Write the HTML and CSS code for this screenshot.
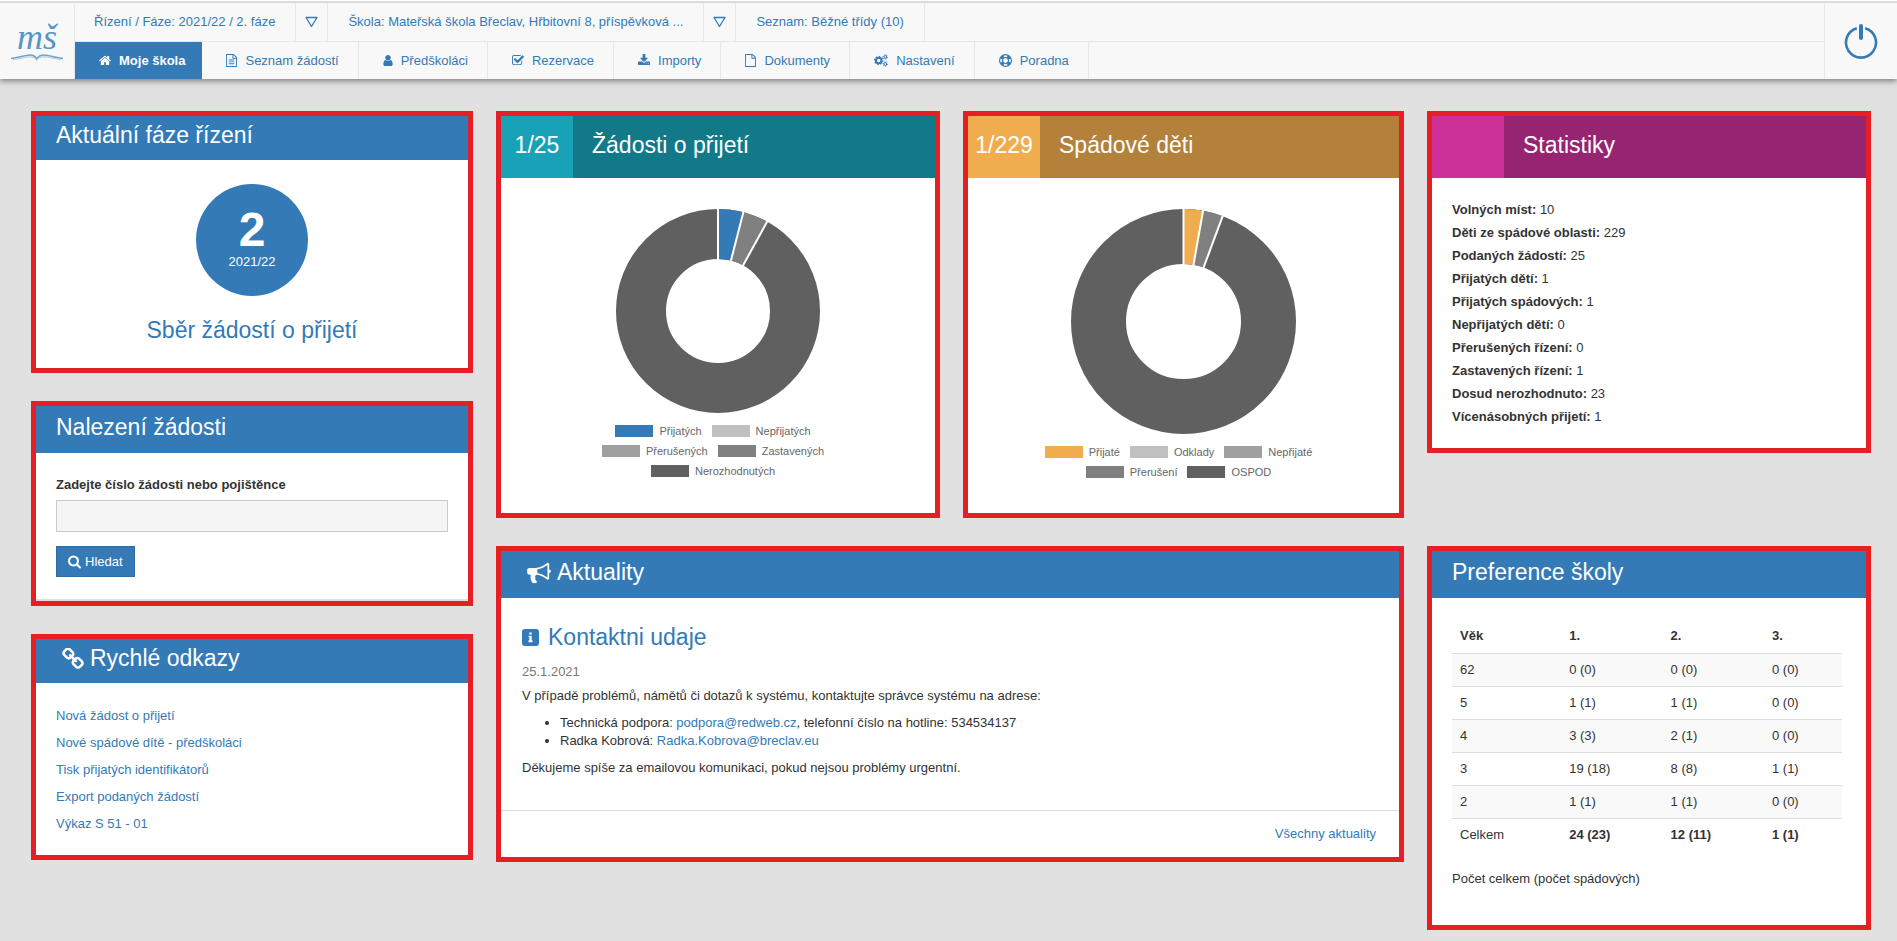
FILE: index.html
```html
<!DOCTYPE html>
<html lang="cs">
<head>
<meta charset="utf-8">
<title>Moje škola</title>
<link rel="stylesheet" href="styles.css">
</head>
<body>
<header class="topbar">
  <a class="logo" href="#">
    <span class="logo-text">mš</span>
    <svg class="logo-book" width="54" height="8" viewBox="0 0 54 8" aria-hidden="true"><path d="M1 5.500C8 5 15 2 20 2q5 0 6.500 4Q29 2 34 2c5 0 12 3 19 3.500" fill="none" stroke="#6fa3cd" stroke-width="1.500"/><path d="M3 6.500C10 6 15 3.800 20 3.800q5 0 6.500 3 2-3 7.500-3c5 0 10 2 17 2.700" fill="none" stroke="#a9c8e0" stroke-width="1"/></svg>
  </a>
  <div class="bars">
    <div class="context">
      <a class="context-item" href="#">Řízení / Fáze: 2021/22 / 2. fáze</a>
      <button class="context-toggle" type="button" aria-label="Vybrat fázi"><svg width="13" height="12" viewBox="0 0 13 12"><path d="M1 1.500h11L6.500 10.500z" fill="none" stroke="currentColor" stroke-width="1.300" stroke-linejoin="round"/></svg></button>
      <a class="context-item" href="#">Škola: Mateřská škola Břeclav, Hřbitovní 8, příspěvková ...</a>
      <button class="context-toggle" type="button" aria-label="Vybrat školu"><svg width="13" height="12" viewBox="0 0 13 12"><path d="M1 1.500h11L6.500 10.500z" fill="none" stroke="currentColor" stroke-width="1.300" stroke-linejoin="round"/></svg></button>
      <a class="context-item" href="#">Seznam: Běžné třídy (10)</a>
    </div>
    <nav class="menu">
      <a class="menu-item active" href="#"><svg width="12" height="13" viewBox="64 0 1664 1792"><path d="M1472 992v480q0 26-19 45t-45 19h-384v-384h-256v384h-384q-26 0-45-19t-19-45v-480q0-1 .5-3t.5-3l575-474 575 474q1 2 1 6zm223-69l-62 74q-8 9-21 11h-3q-13 0-21-7l-692-577-692 577q-12 8-24 7-13-2-21-11l-62-74q-8-10-7-23.500t11-21.500l719-599q32-26 76-26t76 26l244 204v-195q0-14 9-23t23-9h192q14 0 23 9t9 23v408l219 182q10 8 11 21.500t-7 23.500z"/></svg>Moje škola</a>
      <a class="menu-item" href="#"><svg width="11" height="13" viewBox="128 0 1536 1792"><path d="M1596 380q28 28 48 76t20 88v1152q0 40-28 68t-68 28h-1344q-40 0-68-28t-28-68v-1600q0-40 28-68t68-28h896q40 0 88 20t76 48zm-444-244v376h376q-10-29-22-41l-313-313q-12-12-41-22zm384 1528v-1024h-416q-40 0-68-28t-28-68v-416h-768v1536h1280zm-1024-864q0-14 9-23t23-9h704q14 0 23 9t9 23v64q0 14-9 23t-23 9h-704q-14 0-23-9t-9-23v-64zm736 224q14 0 23 9t9 23v64q0 14-9 23t-23 9h-704q-14 0-23-9t-9-23v-64q0-14 9-23t23-9h704zm0 256q14 0 23 9t9 23v64q0 14-9 23t-23 9h-704q-14 0-23-9t-9-23v-64q0-14 9-23t23-9h704z"/></svg>Seznam žádostí</a>
      <a class="menu-item" href="#"><svg width="10" height="13" viewBox="256 0 1280 1792"><path d="M1536 1399q0 109-62.500 187t-150.500 78h-854q-88 0-150.500-78t-62.500-187q0-85 8.500-160.500t31.500-152 58.500-131 94-89 134.500-34.500q131 128 313 128t313-128q76 0 134.500 34.500t94 89 58.500 131 31.500 152 8.500 160.500zm-256-887q0 159-112.500 271.500t-271.500 112.500-271.500-112.500-112.500-271.500 112.500-271.500 271.500-112.500 271.500 112.500 112.500 271.500z"/></svg>Předškoláci</a>
      <a class="menu-item" href="#"><svg width="12" height="13" viewBox="64 0 1664 1792"><path d="M1472 930v318q0 119-84.500 203.500t-203.500 84.500h-832q-119 0-203.500-84.500t-84.500-203.500v-832q0-119 84.500-203.500t203.500-84.500h832q63 0 117 25 15 7 18 23 3 17-9 29l-49 49q-10 10-23 10-3 0-9-2-23-6-45-6h-832q-66 0-113 47t-47 113v832q0 66 47 113t113 47h832q66 0 113-47t47-113v-254q0-13 9-22l64-64q10-10 23-10 6 0 12 3 20 8 20 29zm231-489l-814 814q-24 24-57 24t-57-24l-430-430q-24-24-24-57t24-57l110-110q24-24 57-24t57 24l263 263 647-647q24-24 57-24t57 24l110 110q24 24 24 57t-24 57z"/></svg>Rezervace</a>
      <a class="menu-item" href="#"><svg width="12" height="13" viewBox="64 0 1664 1792"><path d="M1344 1344q0-26-19-45t-45-19-45 19-19 45 19 45 45 19 45-19 19-45zm256 0q0-26-19-45t-45-19-45 19-19 45 19 45 45 19 45-19 19-45zm128-224v320q0 40-28 68t-68 28h-1472q-40 0-68-28t-28-68v-320q0-40 28-68t68-28h465l135 136q58 56 136 56t136-56l136-136h464q40 0 68 28t28 68zm-325-569q17 41-14 70l-448 448q-18 19-45 19t-45-19l-448-448q-31-29-14-70 17-39 59-39h256v-448q0-26 19-45t45-19h256q26 0 45 19t19 45v448h256q42 0 59 39z"/></svg>Importy</a>
      <a class="menu-item" href="#"><svg width="11" height="13" viewBox="128 0 1536 1792"><path d="M1596 380q28 28 48 76t20 88v1152q0 40-28 68t-68 28h-1344q-40 0-68-28t-28-68v-1600q0-40 28-68t68-28h896q40 0 88 20t76 48zm-444-244v376h376q-10-29-22-41l-313-313q-12-12-41-22zm384 1528v-1024h-416q-40 0-68-28t-28-68v-416h-768v1536h1280z"/></svg>Dokumenty</a>
      <a class="menu-item" href="#"><svg width="14" height="13" viewBox="0 0 14 13"><g fill="none" stroke="currentColor"><circle cx="4.700" cy="6.500" r="2.800" stroke-width="2"/><circle cx="4.700" cy="6.500" r="4.100" stroke-width="1.200" pathLength="16" stroke-dasharray="1 1"/><circle cx="11.300" cy="3" r="1.400" stroke-width="1"/><circle cx="11.300" cy="3" r="2.300" stroke-width=".9" pathLength="12" stroke-dasharray="1 1"/><circle cx="11.300" cy="10" r="1.400" stroke-width="1"/><circle cx="11.300" cy="10" r="2.300" stroke-width=".9" pathLength="12" stroke-dasharray="1 1"/></g></svg>Nastavení</a>
      <a class="menu-item" href="#"><svg width="13" height="13" viewBox="0 0 13 13"><g fill="none" stroke="currentColor"><circle cx="6.500" cy="6.500" r="5.900" stroke-width="1.200"/><circle cx="6.500" cy="6.500" r="3" stroke-width="1.200"/><circle cx="6.500" cy="6.500" r="4.500" stroke-width="2.400" pathLength="8" stroke-dasharray="1 1" stroke-dashoffset="-.5"/></g></svg>Poradna</a>
    </nav>
  </div>
  <button class="power" type="button" aria-label="Odhlásit"><svg width="34" height="38" viewBox="0 0 34 38"><path d="M12.800 6.200A15 15 0 1 0 21.200 6.200" fill="none" stroke="currentColor" stroke-width="2.600"/><path d="M17 4v12" stroke="currentColor" stroke-width="4" stroke-linecap="round"/></svg></button>
</header>

<main class="board">
  <div class="side">
    <section class="panel">
      <h2 class="panel-title">Aktuální fáze řízení</h2>
      <div class="phase">
        <div class="phase-circle"><strong class="phase-number">2</strong><span class="phase-year">2021/22</span></div>
        <a class="phase-name" href="#">Sběr žádostí o přijetí</a>
      </div>
    </section>
    <section class="panel">
      <h2 class="panel-title tall">Nalezení žádosti</h2>
      <form class="search">
        <label class="search-label" for="query">Zadejte číslo žádosti nebo pojištěnce</label>
        <input class="search-input" id="query" type="text">
        <button class="search-button" type="button"><svg width="13" height="14" viewBox="64 128 1664 1664"><path d="M1216 832q0-185-131.500-316.500t-316.500-131.500-316.500 131.500-131.500 316.500 131.500 316.500 316.500 131.500 316.500-131.500 131.500-316.500zm512 832q0 52-38 90t-90 38q-54 0-90-38l-343-342q-179 124-399 124-143 0-273.500-55.500t-225-150-150-225-55.500-273.500 55.500-273.500 150-225 225-150 273.500-55.500 273.500 55.500 225 150 150 225 55.500 273.500q0 220-124 399l343 343q37 37 37 90z"/></svg>Hledat</button>
      </form>
    </section>
    <section class="panel">
      <h2 class="panel-title with-icon"><svg width="22" height="22" viewBox="64 64 1664 1664"><path d="M1520 1216q0-40-28-68l-208-208q-28-28-68-28-42 0-72 32 3 3 19 18.500t21.500 21.500 15 19 13 25.500 3.500 27.500q0 40-28 68t-68 28q-15 0-27.500-3.500t-25.500-13-19-15-21.500-21.500-18.500-19q-33 31-33 73 0 40 28 68l206 207q27 27 68 27 40 0 68-26l147-146q28-28 28-67zm-703-705q0-40-28-68l-206-207q-28-28-68-28-39 0-68 27l-147 146q-28 28-28 67 0 40 28 68l208 208q27 27 68 27 42 0 72-31-3-3-19-18.500t-21.500-21.500-15-19-13-25.500-3.500-27.500q0-40 28-68t68-28q15 0 27.500 3.500t25.500 13 19 15 21.500 21.500 18.500 19q33-31 33-73zm895 705q0 120-85 203l-147 146q-83 83-203 83-121 0-204-85l-206-207q-83-83-83-203 0-123 88-209l-88-88q-86 88-208 88-120 0-204-84l-208-208q-84-84-84-204t85-203l147-146q83-83 203-83 121 0 204 85l206 207q83 83 83 203 0 123-88 209l88 88q86-88 208-88 120 0 204 84l208 208q84 84 84 204z"/></svg>Rychlé odkazy</h2>
      <ul class="quick">
        <li><a href="#">Nová žádost o přijetí</a></li>
        <li><a href="#">Nové spádové dítě - předškoláci</a></li>
        <li><a href="#">Tisk přijatých identifikátorů</a></li>
        <li><a href="#">Export podaných žádostí</a></li>
        <li><a href="#">Výkaz S 51 - 01</a></li>
      </ul>
    </section>
  </div>

  <section class="panel">
    <div class="count-head teal"><span class="count">1/25</span><h2 class="count-title">Žádosti o přijetí</h2></div>
    <div class="chart">
      <svg width="204" height="204" viewBox="-102 -102 204 204" role="img" aria-label="Žádosti o přijetí">
        <circle r="77" fill="none" stroke="#606060" stroke-width="50"/>
        <g transform="rotate(-90)" fill="none" stroke-width="50">
          <circle r="77" stroke="#808080" pathLength="360" stroke-dasharray="28.800 360"/>
          <circle r="77" stroke="#337ab7" pathLength="360" stroke-dasharray="14.400 360"/>
        </g>
        <g stroke="#fff" stroke-width="2"><path d="M0-51v-52"/><path d="M0-51v-52" transform="rotate(14.400)"/><path d="M0-51v-52" transform="rotate(28.800)"/></g>
      </svg>
      <ul class="legend">
        <li><span class="swatch blue"></span>Přijatých</li>
        <li><span class="swatch g1"></span>Nepřijatých</li>
        <li><span class="swatch g2"></span>Přerušených</li>
        <li><span class="swatch g3"></span>Zastavených</li>
        <li><span class="swatch g4"></span>Nerozhodnutých</li>
      </ul>
    </div>
  </section>

  <section class="panel">
    <div class="count-head amber"><span class="count">1/229</span><h2 class="count-title">Spádové děti</h2></div>
    <div class="chart">
      <svg width="225" height="225" viewBox="-112.500 -112.500 225 225" role="img" aria-label="Spádové děti">
        <circle r="85" fill="none" stroke="#606060" stroke-width="55"/>
        <g transform="rotate(-90)" fill="none" stroke-width="55">
          <circle r="85" stroke="#808080" pathLength="360" stroke-dasharray="20.400 360"/>
          <circle r="85" stroke="#f0ad4e" pathLength="360" stroke-dasharray="10 360"/>
        </g>
        <g stroke="#fff" stroke-width="2"><path d="M0-56v-58"/><path d="M0-56v-58" transform="rotate(10)"/><path d="M0-56v-58" transform="rotate(20.400)"/></g>
      </svg>
      <ul class="legend">
        <li><span class="swatch orange"></span>Přijaté</li>
        <li><span class="swatch g1"></span>Odklady</li>
        <li><span class="swatch g2"></span>Nepřijaté</li>
        <li><span class="swatch g3"></span>Přerušení</li>
        <li><span class="swatch g4"></span>OSPOD</li>
      </ul>
    </div>
  </section>

  <section class="panel top">
    <div class="count-head purple"><span class="count"></span><h2 class="count-title">Statistiky</h2></div>
    <ul class="stats">
      <li><b>Volných míst:</b> 10</li>
      <li><b>Děti ze spádové oblasti:</b> 229</li>
      <li><b>Podaných žádostí:</b> 25</li>
      <li><b>Přijatých dětí:</b> 1</li>
      <li><b>Přijatých spádových:</b> 1</li>
      <li><b>Nepřijatých dětí:</b> 0</li>
      <li><b>Přerušených řízení:</b> 0</li>
      <li><b>Zastavených řízení:</b> 1</li>
      <li><b>Dosud nerozhodnuto:</b> 23</li>
      <li><b>Vícenásobných přijetí:</b> 1</li>
    </ul>
  </section>

  <section class="panel top wide">
    <h2 class="panel-title tall with-icon"><svg width="24" height="22" viewBox="0 64 1792 1664"><path d="M1664 640q53 0 90.500 37.500t37.500 90.500-37.500 90.500-90.500 37.500v384q0 52-38 90t-90 38q-417-347-812-380-58 19-91 66t-31 100.500 40 92.500q-20 33-23 65.500t6 58 33.500 55 48 50 61.500 50.500q-29 58-111.500 83t-168.500 11.500-132-55.500q-7-23-29.500-87.500t-32-94.500-23-89-15-101 3.500-98.500 22-110.500h-122q-66 0-113-47t-47-113v-192q0-66 47-113t113-47h480q435 0 896-384 52 0 90 38t38 90v384zm-128 604v-954q-394 302-768 343v270q377 42 768 341z"/></svg>Aktuality</h2>
    <article class="news">
      <h3 class="news-title"><svg width="17" height="17" viewBox="0 0 17 17" aria-hidden="true"><rect width="17" height="17" rx="3"/><path d="M7.300 3.500h2.400v2H7.300zM6.600 6.800h3.100v4.800h.9v1.600H6.400v-1.600h.9V8.300h-.7z" fill="#fff"/></svg><a href="#">Kontaktni udaje</a></h3>
      <time class="news-date" datetime="2021-01-25">25.1.2021</time>
      <p>V případě problémů, námětů či dotazů k systému, kontaktujte správce systému na adrese:</p>
      <ul>
        <li>Technická podpora: <a href="#">podpora@redweb.cz</a>, telefonní číslo na hotline: 534534137</li>
        <li>Radka Kobrová: <a href="#">Radka.Kobrova@breclav.eu</a></li>
      </ul>
      <p>Děkujeme spíše za emailovou komunikaci, pokud nejsou problémy urgentní.</p>
    </article>
    <footer class="news-footer"><a href="#">Všechny aktuality</a></footer>
  </section>

  <section class="panel top">
    <h2 class="panel-title tall">Preference školy</h2>
    <div class="preferences">
      <table class="ages">
        <thead><tr><th>Věk</th><th>1.</th><th>2.</th><th>3.</th></tr></thead>
        <tbody>
          <tr><td>62</td><td>0 (0)</td><td>0 (0)</td><td>0 (0)</td></tr>
          <tr><td>5</td><td>1 (1)</td><td>1 (1)</td><td>0 (0)</td></tr>
          <tr><td>4</td><td>3 (3)</td><td>2 (1)</td><td>0 (0)</td></tr>
          <tr><td>3</td><td>19 (18)</td><td>8 (8)</td><td>1 (1)</td></tr>
          <tr><td>2</td><td>1 (1)</td><td>1 (1)</td><td>0 (0)</td></tr>
          <tr><td>Celkem</td><td><b>24 (23)</b></td><td><b>12 (11)</b></td><td><b>1 (1)</b></td></tr>
        </tbody>
      </table>
      <p class="note">Počet celkem (počet spádových)</p>
    </div>
  </section>
</main>
</body>
</html>
```
FILE: styles.css
```css
* { box-sizing: border-box; }

body {
  margin: 0;
  background: #e1e1e1;
  color: #333;
  font: 13px/18px "Liberation Sans", Arial, sans-serif;
}

h2, h3, p, ul { margin: 0; padding: 0; font-weight: normal; }
ul { list-style: none; }
a { color: #337ab7; text-decoration: none; }
button { font: inherit; cursor: pointer; }
svg { display: block; flex: none; fill: currentColor; }

/* Top bar */
.topbar {
  display: flex;
  border-top: 1px solid #fff;
  background: #f8f8f8;
  box-shadow: 0 2px 6px rgba(0, 0, 0, .45);
}
.logo, .bars, .power { border-top: 2px solid #d9dcdc; }
.logo {
  display: flex;
  flex-direction: column;
  align-items: center;
  justify-content: center;
  width: 74px;
  color: #5596c8;
}
.logo-text {
  font: italic 36px/32px "Liberation Serif", "Times New Roman", serif;
}
.bars { flex: 1; border-left: 1px solid #e7e7e7; border-right: 1px solid #e7e7e7; }
.context, .menu { display: flex; }
.context { height: 39px; border-bottom: 1px solid #e7e7e7; }
.context-item, .context-toggle {
  display: flex;
  align-items: center;
  border: 0;
  border-right: 1px solid #e7e7e7;
  background: none;
  color: #337ab7;
}
.context-item { padding: 0 20px; }
.context-item:first-child { padding-left: 19px; }
.context-toggle { width: 32px; padding: 0; justify-content: center; }
.menu { height: 37px; }
.menu-item {
  display: flex;
  align-items: center;
  gap: 8px;
  padding: 0 19px 0 24px;
  border-right: 1px solid #e7e7e7;
}
.menu-item.active {
  padding-right: 17px;
  border: 0;
  background: #337ab7;
  color: #fff;
  font-weight: bold;
}
.power {
  display: flex;
  align-items: center;
  justify-content: center;
  width: 72px;
  padding: 0;
  border-width: 2px 0 0;
  background: none;
  color: #337ab7;
}

/* Board */
.board {
  display: grid;
  grid-template-columns: 442fr 444fr 441fr 444fr;
  gap: 28px 23px;
  padding: 32px 26px 10px 31px;
}
.side {
  display: flex;
  flex-direction: column;
  grid-row: span 2;
  gap: 28px;
}
.panel { border: 5px solid #e61e25; background: #fff; }
.top { align-self: start; }
.wide { grid-column: span 2; }

.panel-title, .count-title, .count { font-size: 23px; line-height: 25px; color: #fff; }
.panel-title { padding: 7px 20px 12px; background: #337ab7; }
.tall { padding: 9px 20px 13px; }
.with-icon { display: flex; align-items: center; gap: 6px; padding-left: 26px; }

.count-head { display: flex; }
.count { width: 72px; padding: 17px 0 20px; text-align: center; }
.count-title { flex: 1; padding: 17px 19px 20px; }
.teal { background: #127989; }
.teal .count { background: #17a2b8; }
.amber { background: #b3813a; }
.amber .count { background: #f0ad4e; }
.purple { background: #962471; }
.purple .count { background: #cb3197; }

/* Current phase */
.phase {
  display: flex;
  flex-direction: column;
  align-items: center;
  gap: 22px;
  padding: 24px 20px 25px;
}
.phase-circle {
  display: flex;
  flex-direction: column;
  align-items: center;
  width: 112px;
  height: 112px;
  padding-top: 24px;
  border-radius: 50%;
  background: #337ab7;
  color: #fff;
}
.phase-number { font-size: 48px; line-height: 44px; }
.phase-year { line-height: 20px; }
.phase-name { font-size: 23px; line-height: 25px; }

/* Search */
.search {
  display: flex;
  flex-direction: column;
  align-items: flex-start;
  padding: 23px 20px 22px;
  border-bottom: 2px solid #e1e1e1;
}
.search-label { margin-bottom: 6px; font-weight: bold; }
.search-input {
  width: 100%;
  height: 32px;
  margin-bottom: 14px;
  padding: 6px 12px;
  border: 1px solid #ccc;
  background: #f5f5f5;
  font: inherit;
}
.search-button {
  display: flex;
  align-items: center;
  gap: 4px;
  height: 31px;
  padding: 0 11px;
  border: 1px solid #2e6da4;
  background: #337ab7;
  color: #fff;
}

.quick { padding: 19px 20px 18px; line-height: 27px; }

/* Charts */
.chart {
  display: flex;
  flex-direction: column;
  align-items: center;
  gap: 8px;
  padding: 31px 20px 31px;
}
.legend {
  display: flex;
  flex-wrap: wrap;
  justify-content: center;
  max-width: 290px;
  color: #666;
  font-size: 11px;
  line-height: 20px;
}
.legend li { display: flex; align-items: center; gap: 6px; margin-right: 10px; }
.swatch { width: 38px; height: 12px; }
.blue { background: #337ab7; }
.orange { background: #f0ad4e; }
.g1 { background: #c0c0c0; }
.g2 { background: #a0a0a0; }
.g3 { background: #808080; }
.g4 { background: #606060; }

.stats { padding: 20px; line-height: 23px; }

/* News */
.news { padding: 27px 21px 33px; }
.news-title {
  display: flex;
  align-items: center;
  gap: 9px;
  margin-bottom: 13px;
  color: #337ab7;
  font-size: 23px;
  line-height: 25px;
}
.news-date { display: block; margin-bottom: 6px; color: #777; }
.news ul { margin: 9px 0; padding-left: 38px; list-style: disc; }
.news-footer { padding: 14px 23px; border-top: 1px solid #ddd; text-align: right; }

/* Preferences */
.preferences { padding: 22px 24px 37px 20px; }
.ages { width: 100%; border-collapse: collapse; table-layout: fixed; }
.ages th, .ages td { height: 33px; padding: 0 8px; text-align: left; }
.ages th { width: 26%; }
.ages th:first-child { width: 28%; }
.ages th:last-child { width: 20%; }
.ages td { border-top: 1px solid #ddd; }
.ages tbody tr:nth-child(odd) { background: #f9f9f9; }
.ages tbody tr:nth-child(even) { background: #fff; }
.note { margin-top: 19px; }
```
